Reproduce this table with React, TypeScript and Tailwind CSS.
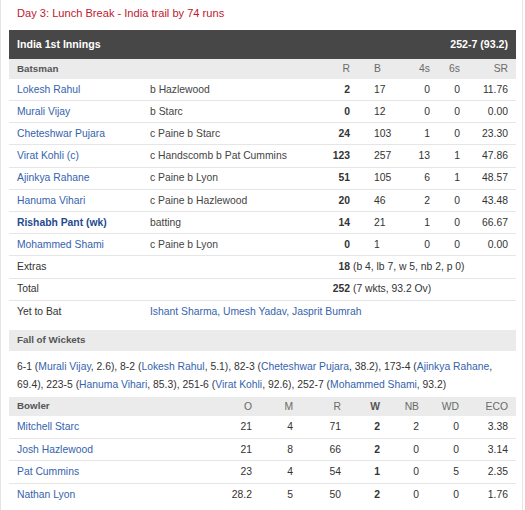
import React from "react";

const batsmen: string[][] = [
  ["Lokesh Rahul", "b Hazlewood", "2", "17", "0", "0", "11.76"],
  ["Murali Vijay", "b Starc", "0", "12", "0", "0", "0.00"],
  ["Cheteshwar Pujara", "c Paine b Starc", "24", "103", "1", "0", "23.30"],
  ["Virat Kohli (c)", "c Handscomb b Pat Cummins", "123", "257", "13", "1", "47.86"],
  ["Ajinkya Rahane", "c Paine b Lyon", "51", "105", "6", "1", "48.57"],
  ["Hanuma Vihari", "c Paine b Hazlewood", "20", "46", "2", "0", "43.48"],
  ["Rishabh Pant (wk)", "batting", "14", "21", "1", "0", "66.67"],
  ["Mohammed Shami", "c Paine b Lyon", "0", "1", "0", "0", "0.00"],
];

const bowlers: string[][] = [
  ["Mitchell Starc", "21", "4", "71", "2", "2", "0", "3.38"],
  ["Josh Hazlewood", "21", "8", "66", "2", "0", "0", "3.14"],
  ["Pat Cummins", "23", "4", "54", "1", "0", "5", "2.35"],
  ["Nathan Lyon", "28.2", "5", "50", "2", "0", "0", "1.76"],
];

const batGrid = "grid grid-cols-[133px_170px_30px_54px_26px_30px_48px] items-center px-2";
const bowlGrid = "grid grid-cols-[205px_30px_41px_48px_39px_39px_40px_49px] items-center px-2";
const link = "text-[#3563ad]";

export default function App() {
  return (
    <div className="w-[523px] h-[510px] overflow-hidden bg-white border-l border-r border-[#e4e4e4] font-['Liberation_Sans',Arial,sans-serif] text-[10.35px] text-[#333]">
      <div className="h-[30px] pt-[6px] pl-4 text-[11.1px] leading-[14px] text-[#c0182f]">
        Day 3: Lunch Break - India trail by 74 runs
      </div>
      <div className="ml-2 w-[507px]">
        <div className="h-[29px] bg-[#474747] px-2 flex items-center justify-between text-white font-bold text-[10.6px]">
          <span>India 1st Innings</span>
          <span>252-7 (93.2)</span>
        </div>
        <div className={`${batGrid} h-[20px] bg-[#ebebeb] text-[#6a6a6a]`}>
          <span className="font-bold text-[9.8px] text-[#555]">Batsman</span>
          <span></span>
          <span className="text-right">R</span>
          <span className="pl-6">B</span>
          <span className="text-right">4s</span>
          <span className="text-right">6s</span>
          <span className="text-right">SR</span>
        </div>
        {batsmen.map((b, i) => (
          <div
            key={b[0]}
            className={`${batGrid} ${i === 0 ? "h-[22px]" : "h-[22.2px]"} border-b border-[#e6e6e6]`}
          >
            <span className={b[1] === "batting" ? "font-bold text-[#1f4a90]" : link}>{b[0]}</span>
            <span className="text-[#444] whitespace-nowrap">{b[1]}</span>
            <span className="text-right font-bold">{b[2]}</span>
            <span className="pl-6">{b[3]}</span>
            <span className="text-right">{b[4]}</span>
            <span className="text-right">{b[5]}</span>
            <span className="text-right">{b[6]}</span>
          </div>
        ))}
        <div className={`${batGrid} h-[22.2px] border-b border-[#e6e6e6]`}>
          <span>Extras</span>
          <span></span>
          <span className="text-right font-bold">18</span>
          <span className="col-span-4 pl-[3px] whitespace-nowrap">(b 4, lb 7, w 5, nb 2, p 0)</span>
        </div>
        <div className={`${batGrid} h-[22.2px] border-b border-[#e6e6e6]`}>
          <span>Total</span>
          <span></span>
          <span className="text-right font-bold">252</span>
          <span className="col-span-4 pl-[3px] whitespace-nowrap">(7 wkts, 93.2 Ov)</span>
        </div>
        <div className={`${batGrid} h-[22.2px]`}>
          <span>Yet to Bat</span>
          <span className={`col-span-6 whitespace-nowrap ${link}`}>Ishant Sharma, Umesh Yadav, Jasprit Bumrah</span>
        </div>
        <div className="mt-[7px] h-[21px] bg-[#ebebeb] px-2 flex items-center font-bold text-[9.8px] text-[#555]">
          Fall of Wickets
        </div>
        <div className="px-2 pt-[7px] pb-[3px] leading-[18px]">
          6-1 (<span className={link}>Murali Vijay</span>, 2.6), 8-2 (<span className={link}>Lokesh Rahul</span>, 5.1), 82-3 (
          <span className={link}>Cheteshwar Pujara</span>, 38.2), 173-4 (<span className={link}>Ajinkya Rahane</span>,
          <br />
          69.4), 223-5 (<span className={link}>Hanuma Vihari</span>, 85.3), 251-6 (<span className={link}>Virat Kohli</span>, 92.6), 252-7 (
          <span className={link}>Mohammed Shami</span>, 93.2)
        </div>
        <div className={`${bowlGrid} h-[19.5px] bg-[#ebebeb] text-[#6a6a6a]`}>
          <span className="font-bold text-[9.8px] text-[#555]">Bowler</span>
          <span className="text-right">O</span>
          <span className="text-right">M</span>
          <span className="text-right">R</span>
          <span className="text-right font-bold text-[#555]">W</span>
          <span className="text-right">NB</span>
          <span className="text-right">WD</span>
          <span className="text-right">ECO</span>
        </div>
        {bowlers.map((b, i) => (
          <div
            key={b[0]}
            className={`${bowlGrid} h-[22.5px] ${i < bowlers.length - 1 ? "border-b border-[#e6e6e6]" : ""}`}
          >
            <span className={link}>{b[0]}</span>
            <span className="text-right">{b[1]}</span>
            <span className="text-right">{b[2]}</span>
            <span className="text-right">{b[3]}</span>
            <span className="text-right font-bold">{b[4]}</span>
            <span className="text-right">{b[5]}</span>
            <span className="text-right">{b[6]}</span>
            <span className="text-right">{b[7]}</span>
          </div>
        ))}
      </div>
    </div>
  );
}
